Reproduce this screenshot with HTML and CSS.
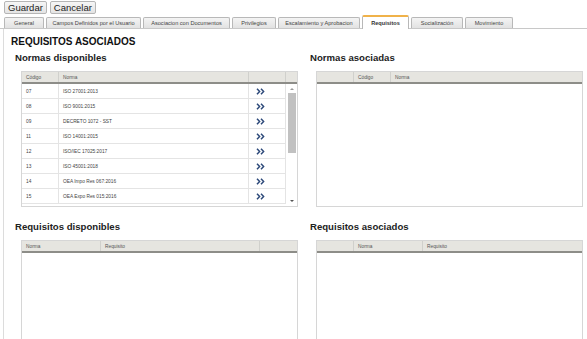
FILE: index.html
```html
<!DOCTYPE html>
<html>
<head>
<meta charset="utf-8">
<link rel="stylesheet" href="styles.css">
</head>
<body>
<div class="toolbar">
  <button class="btn">Guardar</button>
  <button class="btn">Cancelar</button>
</div>
<div class="tabs">
  <div class="tab w40">General</div>
  <div class="tab w95">Campos Definidos por el Usuario</div>
  <div class="tab w87">Asociacion con Documentos</div>
  <div class="tab w44">Privilegios</div>
  <div class="tab w82">Escalamiento y Aprobacion</div>
  <div class="tab active w47">Requisitos</div>
  <div class="tab w52">Socialización</div>
  <div class="tab w48">Movimiento</div>
</div>
<div class="panel">
  <h1 class="title">REQUISITOS ASOCIADOS</h1>
  <div class="sections">
    <section class="sec">
      <h2 class="subtitle">Normas disponibles</h2>
      <div class="grid gl">
        <div class="ghead">
          <div class="c-cod">Código</div>
          <div class="c-norma">Norma</div>
          <div class="c-act"></div>
          <div class="c-sb"></div>
        </div>
        <div class="gbody">
          <div class="rows">
            <div class="row"><div class="c-cod">07</div><div class="c-norma">ISO 27001:2013</div><div class="c-act"><svg class="arr" viewBox="0 0 9 7"><path d="M1 0.8 L3.6 3.5 L1 6.2 M5 0.8 L7.6 3.5 L5 6.2"/></svg></div></div>
            <div class="row"><div class="c-cod">08</div><div class="c-norma">ISO 9001:2015</div><div class="c-act"><svg class="arr" viewBox="0 0 9 7"><path d="M1 0.8 L3.6 3.5 L1 6.2 M5 0.8 L7.6 3.5 L5 6.2"/></svg></div></div>
            <div class="row"><div class="c-cod">09</div><div class="c-norma">DECRETO 1072 - SST</div><div class="c-act"><svg class="arr" viewBox="0 0 9 7"><path d="M1 0.8 L3.6 3.5 L1 6.2 M5 0.8 L7.6 3.5 L5 6.2"/></svg></div></div>
            <div class="row"><div class="c-cod">11</div><div class="c-norma">ISO 14001:2015</div><div class="c-act"><svg class="arr" viewBox="0 0 9 7"><path d="M1 0.8 L3.6 3.5 L1 6.2 M5 0.8 L7.6 3.5 L5 6.2"/></svg></div></div>
            <div class="row"><div class="c-cod">12</div><div class="c-norma">ISO/IEC 17025:2017</div><div class="c-act"><svg class="arr" viewBox="0 0 9 7"><path d="M1 0.8 L3.6 3.5 L1 6.2 M5 0.8 L7.6 3.5 L5 6.2"/></svg></div></div>
            <div class="row"><div class="c-cod">13</div><div class="c-norma">ISO 45001:2018</div><div class="c-act"><svg class="arr" viewBox="0 0 9 7"><path d="M1 0.8 L3.6 3.5 L1 6.2 M5 0.8 L7.6 3.5 L5 6.2"/></svg></div></div>
            <div class="row"><div class="c-cod">14</div><div class="c-norma">OEA Impo Res 067:2016</div><div class="c-act"><svg class="arr" viewBox="0 0 9 7"><path d="M1 0.8 L3.6 3.5 L1 6.2 M5 0.8 L7.6 3.5 L5 6.2"/></svg></div></div>
            <div class="row"><div class="c-cod">15</div><div class="c-norma">OEA Expo Res 015:2016</div><div class="c-act"><svg class="arr" viewBox="0 0 9 7"><path d="M1 0.8 L3.6 3.5 L1 6.2 M5 0.8 L7.6 3.5 L5 6.2"/></svg></div></div>
          </div>
          <div class="scrollbar">
            <div class="sb-up"></div>
            <div class="sb-thumb"></div>
            <div class="sb-space"></div>
            <div class="sb-down"></div>
          </div>
        </div>
      </div>
    </section>
    <section class="sec">
      <h2 class="subtitle">Normas asociadas</h2>
      <div class="grid gr">
        <div class="ghead">
          <div class="c-blank"></div>
          <div class="c-cod">Código</div>
          <div class="c-norma">Norma</div>
        </div>
        <div class="gbody empty"></div>
      </div>
    </section>
    <section class="sec">
      <h2 class="subtitle">Requisitos disponibles</h2>
      <div class="grid gl">
        <div class="ghead">
          <div class="c-nom">Norma</div>
          <div class="c-req">Requisito</div>
          <div class="c-rest"></div>
        </div>
        <div class="gbody empty tall"></div>
      </div>
    </section>
    <section class="sec">
      <h2 class="subtitle">Requisitos asociados</h2>
      <div class="grid gr">
        <div class="ghead">
          <div class="c-blank"></div>
          <div class="c-nom2">Norma</div>
          <div class="c-req">Requisito</div>
        </div>
        <div class="gbody empty tall"></div>
      </div>
    </section>
  </div>
</div>
</body>
</html>
```

FILE: styles.css
```css
* { box-sizing: border-box; }
html, body { margin: 0; padding: 0; background: #fff; overflow: hidden; }
body { font-family: "Liberation Sans", Arial, sans-serif; color: #222; width: 587px; height: 339px; }

.toolbar { display: flex; gap: 3px; padding: 1px 0 0 4px; height: 15px; }
.btn {
  font-family: "Liberation Sans", Arial, sans-serif;
  font-size: 9.5px; color: #222;
  height: 13px; padding: 0 3px; line-height: 11px;
  background: linear-gradient(#f6f6f6, #e4e4e4);
  border: 1px solid #b5b5b5; border-radius: 2px;
  margin: 0;
}

.tabs {
  display: flex; gap: 2px; align-items: flex-end;
  padding-left: 4px; height: 14px; margin-top: 0;
  border-bottom: 1px solid #c8c8c8;
}
.tab {
  height: 11px; font-size: 5.6px; color: #444;
  display: flex; align-items: center; justify-content: center;
  background: linear-gradient(#f4f4f4, #e2e2e2);
  border: 1px solid #b8b8b8; border-bottom: none;
  border-radius: 2px 2px 0 0; white-space: nowrap;
}
.tab.active {
  background: #fff; font-weight: bold; color: #333;
  border-top: 2px solid #f0b24a; margin-bottom: -1px; height: 14px;
}
.w40 { width: 40px; } .w95 { width: 95px; } .w87 { width: 87px; }
.w44 { width: 44px; } .w82 { width: 82px; } .w47 { width: 47px; }
.w52 { width: 52px; } .w48 { width: 48px; }

.panel { margin-left: 3px; border-left: 1px solid #dcdcdc; padding: 7px 0 0 7px; height: 310px; overflow: hidden; }
.title { margin: 0; font-size: 10px; font-weight: bold; color: #111; line-height: 12px; }

.sections { display: grid; grid-template-columns: 295px 277px; row-gap: 14px; margin-top: 4px; }
.sec { padding-left: 4px; }
.subtitle { margin: 0 0 7px; font-size: 9.6px; font-weight: bold; color: #222; line-height: 12px; }

.grid { border: 1px solid #d6d6d6; background: #fff; }
.gl { width: 277px; margin-left: 6px; }
.gr { width: 267px; margin-left: 6px; }

.ghead {
  display: flex; height: 12px; background: #e6e5e0;
  border-bottom: 2px solid #8d8d88; font-size: 4.8px; color: #555;
}
.ghead > div { display: flex; align-items: center; padding-left: 4px; border-right: 1px solid #d0d0cc; }
.ghead > div:last-child { border-right: none; }

.c-cod { width: 37px; flex: none; }
.c-norma { width: 190px; flex: none; }
.c-act { width: 37px; flex: none; }
.c-sb { flex: 1; }
.gr .c-norma { flex: 1; }
.c-blank { width: 37px; flex: none; }
.c-nom { width: 79px; flex: none; }
.c-req { width: 159px; flex: none; }
.c-rest { flex: 1; }
.c-nom2 { width: 69px; flex: none; }
.gr .c-req { flex: 1; }

.gbody { display: flex; height: 122px; overflow: hidden; }
.gbody.empty { display: block; }
.gbody.tall { height: 130px; }
.rows { width: 264px; }
.row { display: flex; height: 15px; border-bottom: 1px solid #e4e4e4; font-size: 4.8px; color: #444; }
.row > div { display: flex; align-items: center; padding-left: 4px; border-right: 1px solid #e4e4e4; }
.row .c-act { padding-left: 7px; }
.arr { width: 9px; height: 7px; fill: none; stroke: #2e4a7a; stroke-width: 1.5; }

.scrollbar { flex: 1; display: flex; flex-direction: column; align-items: center; padding: 2px 1px; }
.sb-up { width: 0; height: 0; border-left: 2px solid transparent; border-right: 2px solid transparent; border-bottom: 2px solid #999; margin: 2px 0 3px; }
.sb-thumb { width: 8px; height: 60px; background: #c1c1c1; }
.sb-space { flex: 1; }
.sb-down { width: 0; height: 0; border-left: 2px solid transparent; border-right: 2px solid transparent; border-top: 2px solid #555; margin-bottom: 2px; }
```
